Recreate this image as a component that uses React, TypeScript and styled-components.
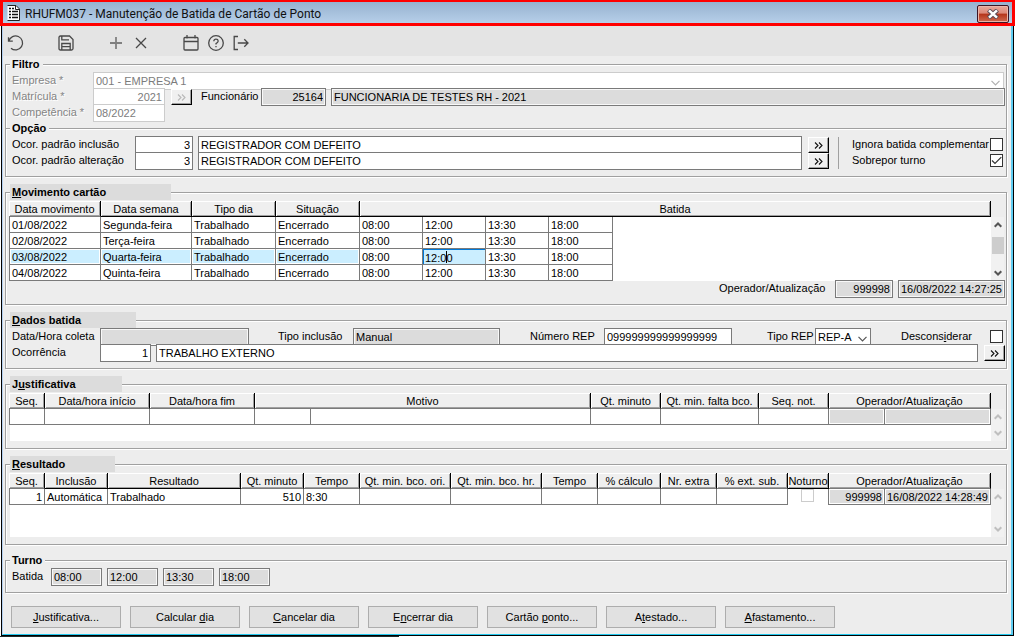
import React from 'react';
import styled, { createGlobalStyle, css } from 'styled-components';

const GlobalStyle = createGlobalStyle`
  * { box-sizing: border-box; }
  body {
    margin: 0;
    background: #fff;
    color: #000;
    font: 11px/16px "Liberation Sans", Arial, sans-serif;
  }
  button, input, select { font: inherit; color: inherit; border-radius: 0; }
`;

const LINE = '#7a7a7a';
const FACE = '#ededed';
const READONLY = '#dcdcdc';
const ACTIVE = '#cbeeff';

/* ---------- window ---------- */

const TitleBar = styled.header`
  display: flex;
  align-items: center;
  height: 26px;
  padding: 0 3px 0 4px;
  border: 3px solid #f00;
  border-top-width: 2px;
  background: linear-gradient(#97b2cf, #b6cfe9);
`;

const Title = styled.h1`
  flex: 1;
  margin: 0 0 0 5px;
  padding-top: 2px;
  font: 12px/20px Roboto, "Open Sans", sans-serif;
  color: #111;
  white-space: nowrap;
`;

const CloseButton = styled.button`
  display: flex;
  align-items: center;
  justify-content: center;
  align-self: flex-end;
  width: 32px;
  height: 18px;
  padding: 0;
  border: 1px solid #3d1525;
  border-radius: 2px;
  background: linear-gradient(#e9a79b 0, #dc8878 45%, #b5341a 50%, #cf6a50 100%);
  box-shadow: inset 0 0 0 1px #eab5a8;
`;

const Frame = styled.div`
  margin: 0 1px;
  border: 1px solid #000;
  border-top: 0;
`;

const Content = styled.main`
  padding-bottom: 6px;
  border: solid;
  border-width: 0 2px 1px 1px;
  border-color: #5fcdf2 #5fcdf2 #22c8ee #b4d0f0;
  background: ${FACE};
`;

const Shadow = styled.div`
  width: 399px;
  height: 1px;
  background: #1c2a2a;
`;

const Toolbar = styled.nav`
  display: flex;
  align-items: center;
  height: 30px;
  padding: 4px 0 0;
  background: #e4e4e4;
`;

const ToolButton = styled.button<{ $gap?: boolean; $soft?: boolean }>`
  display: flex;
  align-items: center;
  justify-content: center;
  width: 25px;
  height: 24px;
  margin-left: ${(p) => (p.$gap ? 25 : 0)}px;
  padding: 0;
  border: 0;
  background: none;
  color: ${(p) => (p.$soft ? '#808080' : '#484848')};
`;

const Form = styled.form`
  padding: 0 4px 0 2px;
`;

/* ---------- groups ---------- */

const Group = styled.fieldset<{ $joined?: boolean }>`
  min-width: 0;
  margin: ${(p) => (p.$joined ? -9 : 7)}px 0 0;
  padding: 0 1px 8px 3px;
  border: 1px solid #a0a0a0;
  box-shadow: 1px 1px 0 #fff, inset 1px 1px 0 #fff;

  &:first-of-type { margin-top: 0; }
`;

const Legend = styled.legend<{ $band?: number }>`
  width: ${(p) => (p.$band ? `${p.$band}px` : 'auto')};
  height: 16px;
  margin-left: 1px;
  padding: 0 3px 0 2px;
  background: ${(p) => (p.$band ? READONLY : FACE)};
  font-weight: bold;
`;

const Row = styled.div<{ $end?: boolean }>`
  display: flex;
  justify-content: ${(p) => (p.$end ? 'flex-end' : 'flex-start')};
  height: 16px;
`;

const Label = styled.label<{ $w?: number; $off?: boolean; $ml?: number }>`
  flex: none;
  width: ${(p) => (p.$w ? `${p.$w}px` : 'auto')};
  margin-left: ${(p) => p.$ml ?? 3}px;
  white-space: nowrap;
  ${(p) => p.$off && css`
    color: #848484;
    text-shadow: 1px 1px 0 #fff;
  `}
`;

const fieldBox = css`
  height: 18px;
  padding: 0 2px;
  border: 1px solid ${LINE};
  background: #fff;
  outline: 0;
`;

const Field = styled.input<{ $w?: number; $ml?: number; $right?: boolean; $off?: boolean }>`
  ${fieldBox}
  flex: ${(p) => (p.$w ? 'none' : '1')};
  min-width: 0;
  width: ${(p) => (p.$w ? `${p.$w}px` : 'auto')};
  margin-left: ${(p) => p.$ml ?? 0}px;
  text-align: ${(p) => (p.$right ? 'right' : 'left')};
  ${(p) => p.readOnly && css`
    background: ${READONLY};
    box-shadow: inset 0 0 0 1px #f8f8f8;
  `}
  ${(p) => p.$off && css`
    border-color: #ccc;
    color: #7c7c7c;
  `}
`;

const SelectBox = styled.span<{ $w?: number; $mr?: number; $off?: boolean }>`
  display: grid;
  flex: ${(p) => (p.$w ? 'none' : '1')};
  width: ${(p) => (p.$w ? `${p.$w}px` : 'auto')};
  height: 18px;
  margin-right: ${(p) => p.$mr ?? 0}px;
  color: ${(p) => (p.$off ? '#b0b0b0' : '#555')};

  select, svg { grid-area: 1 / 1; }

  select {
    ${fieldBox}
    appearance: none;
    width: 100%;
    border-color: ${(p) => (p.$off ? '#ccc' : LINE)};
    color: ${(p) => (p.$off ? '#7c7c7c' : '#000')};
    opacity: 1;
  }

  svg {
    justify-self: end;
    margin: 8px 4px 0 0;
    pointer-events: none;
  }
`;

const LookupButton = styled.button`
  display: flex;
  align-items: center;
  justify-content: center;
  flex: none;
  width: 21px;
  height: 16px;
  margin: 1px 0 0 6px;
  padding: 0;
  border: 1px solid;
  border-color: #fff #000 #000 #fff;
  background: #f0f0f0;
  box-shadow: inset -1px -1px 0 #a0a0a0;
  color: #111;

  &:disabled { color: #b8b8b8; }
`;

const Check = styled.span`
  position: relative;
  flex: none;
  width: 13px;
  height: 13px;
  margin: 2px 2px 0 auto;

  input {
    display: block;
    appearance: none;
    width: 13px;
    height: 13px;
    margin: 0;
    border: 1px solid #333;
    background: #fff;
  }
  input:disabled { border-color: #ccc; }
  svg { position: absolute; left: 0; top: 0; display: none; pointer-events: none; }
  input:checked + svg { display: block; }
`;

const OptionColumns = styled.div`
  display: flex;
  height: 32px;
`;

const OptionMain = styled.div`
  flex: 1;
  min-width: 0;
`;

const Separator = styled.div`
  width: 1px;
  margin: 1px 0 -1px 9px;
  background: #a0a0a0;
`;

const OptionSide = styled.div`
  width: 166px;
`;

/* ---------- grids ---------- */

const GridArea = styled.div<{ $h: number }>`
  display: flex;
  min-height: ${(p) => p.$h}px;
  margin: 0 1px -1px 0;
  border: solid transparent;
  border-width: 1px 0 0 1px;
  background: #fff;
  background-clip: padding-box;
`;

const GridMain = styled.div`
  flex: 1;
  min-width: 0;
  margin-left: -1px;
`;

const Grid = styled.table`
  width: 100%;
  table-layout: fixed;
  border-collapse: separate;
  border-spacing: 0;
`;

const HeadCell = styled.th<{ $dark?: boolean }>`
  height: 16px;
  padding: 2px 0 0;
  border: solid;
  border-width: 0 1px 1px 0;
  border-color: #000;
  border-bottom-color: ${(p) => (p.$dark ? '#000' : LINE)};
  background: #efefef;
  box-shadow: inset 1px 1px 0 #fff, inset -1px -1px 0 #a0a0a0;
  font-weight: normal;
  line-height: 13px;
  white-space: nowrap;
  overflow: hidden;
`;

const Cell = styled.td<{ $active?: boolean; $read?: boolean; $right?: boolean; $bare?: boolean }>`
  height: 16px;
  padding: 2px 2px 0;
  border: solid ${LINE};
  border-width: ${(p) => (p.$bare ? '0' : '0 1px 1px 0')};
  background: ${(p) => (p.$active ? ACTIVE : p.$read ? READONLY : '#fff')};
  box-shadow: ${(p) => (p.$active || p.$read ? 'inset 0 0 0 1px #fff' : 'none')};
  line-height: 13px;
  text-align: ${(p) => (p.$right ? 'right' : 'left')};
  white-space: nowrap;

  &:first-child { border-left-width: 1px; }
`;

const FocusCell = styled(Cell)`
  position: relative;
  padding: 0;
  box-shadow: inset 1px 1px 0 #0078d7;

  input {
    display: block;
    width: 100%;
    height: 15px;
    padding: 2px 2px 0;
    border: 0;
    background: none;
    outline: 0;
  }
`;

const Caret = styled.i`
  position: absolute;
  left: 23px;
  top: 2px;
  width: 1px;
  height: 12px;
  background: #000;
`;

const CheckCell = styled(Cell)`
  border-width: 0 1px 0 0;
  padding: 0 0 0 13px;
  vertical-align: top;

  span { display: block; height: 13px; margin: 0; }
`;

const Scroll = styled.div<{ $off?: boolean }>`
  display: flex;
  flex-direction: column;
  align-items: center;
  flex: none;
  width: 13px;
  padding-top: 16px;
  background: linear-gradient(${FACE} 16px, #f1f1f1 16px);
  color: ${(p) => (p.$off ? '#bfbfbf' : '#555')};

  button {
    display: flex;
    align-items: center;
    justify-content: center;
    width: 12px;
    height: 16px;
    padding: 0;
    border: 0;
    background: none;
    color: inherit;
  }
  button:last-child { margin-top: auto; }
`;

const Thumb = styled.div`
  width: 12px;
  height: 17px;
  margin-top: 4px;
  background: #cdcdcd;
`;

/* ---------- footer ---------- */

const Actions = styled.div`
  display: flex;
  gap: 9px;
  margin: 13px 0 0 6px;
`;

const ActionButton = styled.button`
  width: 110px;
  height: 22px;
  padding: 0;
  border: 1px solid #adadad;
  background: #e1e1e1;
`;

/* ---------- drawings ---------- */

const Glyph = ({ children }: { children: React.ReactNode }) => (
  <svg width="18" height="18" viewBox="0 0 18 18" fill="none" stroke="currentColor" strokeWidth="1.3">
    {children}
  </svg>
);

const Chevron = () => (
  <svg width="9" height="6" viewBox="0 0 9 6" fill="none" stroke="currentColor" strokeWidth="1.2">
    <path d="M.5 .8 4.5 4.8 8.5 .8" />
  </svg>
);

const Arrow = ({ up }: { up?: boolean }) => (
  <svg width="8" height="6" viewBox="0 0 8 6" fill="none" stroke="currentColor" strokeWidth="2">
    <path d={up ? 'M.7 4.8 4 1.5 7.3 4.8' : 'M.7 1.2 4 4.5 7.3 1.2'} />
  </svg>
);

const Tick = () => (
  <svg width="13" height="13" viewBox="0 0 13 13" fill="none" stroke="#333" strokeWidth="1.2">
    <path d="M2 6.5 5 9.5 11.3 3.2" />
  </svg>
);

const Lookup = ({ label, disabled }: { label: string; disabled?: boolean }) => (
  <LookupButton type="button" aria-label={label} disabled={disabled}>
    <svg width="9" height="7" viewBox="0 0 9 7" fill="none" stroke="currentColor" strokeWidth="1.1">
      <path d="M1 .5 4 3.5 1 6.5M5 .5 8 3.5 5 6.5" />
    </svg>
  </LookupButton>
);

const DocumentIcon = () => (
  <svg width="13" height="16" viewBox="0 0 13 16">
    <path d="M.5 .5H9L12.5 4V15.5H.5Z" fill="#fff" />
    <path d="M.5 .5H9L12.5 4V15.5H.5" fill="none" stroke="#222" />
    <path d="M8.5 .5V4.5H12.5" fill="none" stroke="#222" />
    <path d="M2 3.5H4M2 6.5H4M2 9.5H4M2 12.5H4M5 3.5H7M5 6.5H11M5 9.5H11M5 12.5H11" stroke="#111" strokeWidth="1.4" />
  </svg>
);

/* ---------- grid parts ---------- */

type Head = { text: React.ReactNode; span?: number; dark?: boolean };

const GridTable = ({ widths, heads, label, children }: {
  widths: (number | null)[];
  heads: Head[];
  label: string;
  children: React.ReactNode;
}) => (
  <GridMain>
    <Grid aria-label={label}>
      <colgroup>
        {widths.map((w, i) => <col key={i} width={w ?? undefined} />)}
      </colgroup>
      <thead>
        <tr>
          {heads.map((h, i) => <HeadCell key={i} scope="col" colSpan={h.span} $dark={h.dark}>{h.text}</HeadCell>)}
        </tr>
      </thead>
      <tbody>{children}</tbody>
    </Grid>
  </GridMain>
);

const ScrollBar = ({ thumb }: { thumb?: boolean }) => (
  <Scroll $off={!thumb}>
    <button type="button" aria-label="Rolar para cima"><Arrow up /></button>
    {thumb && <Thumb />}
    <button type="button" aria-label="Rolar para baixo"><Arrow /></button>
  </Scroll>
);

const days = [
  { date: '01/08/2022', week: 'Segunda-feira' },
  { date: '02/08/2022', week: 'Terça-feira' },
  { date: '03/08/2022', week: 'Quarta-feira', active: true },
  { date: '04/08/2022', week: 'Quinta-feira' },
];

const shift = ['08:00', '12:00', '13:30', '18:00'];

export default function App() {
  return (
    <>
      <GlobalStyle />
      <TitleBar>
        <DocumentIcon />
        <Title>RHUFM037 - Manutenção de Batida de Cartão de Ponto</Title>
        <CloseButton aria-label="Fechar">
          <svg width="12" height="10" viewBox="0 0 12 10" fill="none">
            <path d="M1.5 1 10.5 9M10.5 1 1.5 9" stroke="#5a4a55" strokeWidth="4.4" />
            <path d="M2 1.4 10 8.6M10 1.4 2 8.6" stroke="#fff" strokeWidth="2.6" />
          </svg>
        </CloseButton>
      </TitleBar>
      <Frame>
        <Content>
          <Toolbar>
            <ToolButton aria-label="Desfazer">
              <Glyph><path d="M1.5 3.2V7.2H5.8M1.8 7A7 7 0 1 1 4 14.2" /></Glyph>
            </ToolButton>
            <ToolButton $gap aria-label="Salvar">
              <Glyph>
                <path d="M3.5 2H12.5L16 5.5V14.5Q16 16 14.5 16H3.5Q2 16 2 14.5V3.5Q2 2 3.5 2Z" />
                <path d="M4.8 2V5.8H12M4.8 16V9.5H13.2V16M5 12.7H13" />
              </Glyph>
            </ToolButton>
            <ToolButton $gap $soft aria-label="Incluir">
              <Glyph><path d="M9 3V15M3 9H15" strokeWidth="1.8" /></Glyph>
            </ToolButton>
            <ToolButton aria-label="Excluir">
              <Glyph><path d="M4 4 14 14M14 4 4 14" /></Glyph>
            </ToolButton>
            <ToolButton $gap aria-label="Calendário">
              <Glyph><path d="M3 3.5H15Q16 3.5 16 4.5V15Q16 16 15 16H3Q2 16 2 15V4.5Q2 3.5 3 3.5ZM2 7.5H16M5 1V4.5M13 1V4.5" /></Glyph>
            </ToolButton>
            <ToolButton aria-label="Ajuda">
              <Glyph>
                <circle cx="9" cy="9" r="7.3" />
                <path d="M6.8 7.2Q7 5.2 9 5.2T11.2 7Q11.2 8.2 9 9.6V10.4M9 12V13.2" />
              </Glyph>
            </ToolButton>
            <ToolButton aria-label="Sair">
              <Glyph><path d="M6 2.5H2.2V15.5H6M5.8 9H16M12.3 5.3 16 9 12.3 12.7" /></Glyph>
            </ToolButton>
          </Toolbar>

          <Form onSubmit={(e) => e.preventDefault()}>
            <Group>
              <Legend>Filtro</Legend>
              <Row>
                <Label htmlFor="empresa" $w={81} $off>Empresa *</Label>
                <SelectBox $off $mr={1}>
                  <select id="empresa" disabled><option>001 - EMPRESA 1</option></select>
                  <Chevron />
                </SelectBox>
              </Row>
              <Row>
                <Label htmlFor="matricula" $w={81} $off>Matrícula *</Label>
                <Field id="matricula" $w={72} $right $off defaultValue="2021" />
                <Lookup label="Pesquisar matrícula" disabled />
                <Label htmlFor="funcionario" $ml={9} $w={60}>Funcionário</Label>
                <Field id="funcionario" $w={65} $right readOnly value="25164" />
                <Field aria-label="Nome do funcionário" $ml={5} readOnly value="FUNCIONARIA DE TESTES RH - 2021" />
              </Row>
              <Row>
                <Label htmlFor="competencia" $w={81} $off>Competência *</Label>
                <Field id="competencia" $w={72} $off defaultValue="08/2022" />
              </Row>
            </Group>

            <Group $joined>
              <Legend>Opção</Legend>
              <OptionColumns>
                <OptionMain>
                  <Row>
                    <Label htmlFor="inclusao" $w={123}>Ocor. padrão inclusão</Label>
                    <Field id="inclusao" $w={58} $right defaultValue="3" />
                    <Field aria-label="Descrição da inclusão" $ml={5} defaultValue="REGISTRADOR COM DEFEITO" />
                    <Lookup label="Pesquisar inclusão" />
                  </Row>
                  <Row>
                    <Label htmlFor="alteracao" $w={123}>Ocor. padrão alteração</Label>
                    <Field id="alteracao" $w={58} $right defaultValue="3" />
                    <Field aria-label="Descrição da alteração" $ml={5} defaultValue="REGISTRADOR COM DEFEITO" />
                    <Lookup label="Pesquisar alteração" />
                  </Row>
                </OptionMain>
                <Separator />
                <OptionSide>
                  <Row>
                    <Label htmlFor="ignora" $ml={13}>Ignora batida complementar</Label>
                    <Check><input type="checkbox" id="ignora" /><Tick /></Check>
                  </Row>
                  <Row>
                    <Label htmlFor="sobrepor" $ml={13}>Sobrepor turno</Label>
                    <Check><input type="checkbox" id="sobrepor" defaultChecked /><Tick /></Check>
                  </Row>
                </OptionSide>
              </OptionColumns>
            </Group>

            <Group>
              <Legend $band={161}><u>M</u>ovimento cartão</Legend>
              <GridArea $h={81}>
                <GridTable
                  label="Movimento cartão"
                  widths={[92, 91, 84, 84, 63, 63, 63, 64, null]}
                  heads={[
                    { text: 'Data movimento' },
                    { text: 'Data semana', dark: true },
                    { text: 'Tipo dia', dark: true },
                    { text: 'Situação', dark: true },
                    { text: 'Batida', span: 5, dark: true },
                  ]}
                >
                  {days.map((d) => (
                    <tr key={d.date}>
                      <Cell $active={d.active}>{d.date}</Cell>
                      <Cell $active={d.active}>{d.week}</Cell>
                      <Cell $active={d.active}>Trabalhado</Cell>
                      <Cell $active={d.active}>Encerrado</Cell>
                      {shift.map((t, i) => (d.active && i === 1 ? (
                        <FocusCell key={t} $active>
                          <input aria-label="Batida" defaultValue={t} />
                          <Caret />
                        </FocusCell>
                      ) : <Cell key={t}>{t}</Cell>))}
                      <Cell $bare />
                    </tr>
                  ))}
                </GridTable>
                <ScrollBar thumb />
              </GridArea>
              <Row $end>
                <Label htmlFor="operador" $w={116}>Operador/Atualização</Label>
                <Field id="operador" $w={58} $right readOnly value="999998" />
                <Field aria-label="Data da atualização" $w={107} $ml={5} readOnly value="16/08/2022 14:27:25" />
              </Row>
            </Group>

            <Group>
              <Legend $band={126}><u>D</u>ados batida</Legend>
              <Row>
                <Label htmlFor="coleta" $w={88}>Data/Hora coleta</Label>
                <Field id="coleta" $w={149} readOnly value="" />
                <Label htmlFor="tipo-inclusao" $ml={29} $w={75}>Tipo inclusão</Label>
                <Field id="tipo-inclusao" $w={147} readOnly value="Manual" />
                <Label htmlFor="numero-rep" $ml={30} $w={74}>Número REP</Label>
                <Field id="numero-rep" $w={128} defaultValue="099999999999999999" />
                <Label htmlFor="tipo-rep" $ml={35} $w={48}>Tipo REP</Label>
                <SelectBox $w={56}>
                  <select id="tipo-rep"><option>REP-A</option></select>
                  <Chevron />
                </SelectBox>
                <Label htmlFor="desconsiderar" $ml={30}>Descons<u>i</u>derar</Label>
                <Check><input type="checkbox" id="desconsiderar" /><Tick /></Check>
              </Row>
              <Row>
                <Label htmlFor="ocorrencia" $w={88}>Ocorrência</Label>
                <Field id="ocorrencia" $w={51} $right defaultValue="1" />
                <Field aria-label="Descrição da ocorrência" $ml={5} defaultValue="TRABALHO EXTERNO" />
                <Lookup label="Pesquisar ocorrência" />
              </Row>
            </Group>

            <Group>
              <Legend $band={112}>J<u>u</u>stificativa</Legend>
              <GridArea $h={49}>
                <GridTable
                  label="Justificativa"
                  widths={[36, 105, 105, 56, null, 70, 98, 70, 56, 106]}
                  heads={[
                    { text: 'Seq.' },
                    { text: 'Data/hora início' },
                    { text: 'Data/hora fim' },
                    { text: 'Motivo', span: 2 },
                    { text: 'Qt. minuto' },
                    { text: 'Qt. min. falta bco.' },
                    { text: 'Seq. not.' },
                    { text: 'Operador/Atualização', span: 2 },
                  ]}
                >
                  <tr>
                    <Cell /><Cell /><Cell /><Cell /><Cell /><Cell /><Cell /><Cell />
                    <Cell $read /><Cell $read />
                  </tr>
                </GridTable>
                <ScrollBar />
              </GridArea>
            </Group>

            <Group>
              <Legend $band={105}><u>R</u>esultado</Legend>
              <GridArea $h={65}>
                <GridTable
                  label="Resultado"
                  widths={[36, 63, null, 63, 56, 91, 91, 56, 63, 56, 71, 41, 56, 106]}
                  heads={[
                    { text: 'Seq.' },
                    { text: 'Inclusão', dark: true },
                    { text: 'Resultado', dark: true },
                    { text: 'Qt. minuto' },
                    { text: 'Tempo' },
                    { text: 'Qt. min. bco. ori.' },
                    { text: 'Qt. min. bco. hr.' },
                    { text: 'Tempo' },
                    { text: '% cálculo' },
                    { text: 'Nr. extra' },
                    { text: '% ext. sub.' },
                    { text: 'Noturno', dark: true },
                    { text: 'Operador/Atualização', span: 2 },
                  ]}
                >
                  <tr>
                    <Cell $right>1</Cell>
                    <Cell>Automática</Cell>
                    <Cell>Trabalhado</Cell>
                    <Cell $right>510</Cell>
                    <Cell>8:30</Cell>
                    <Cell /><Cell /><Cell /><Cell /><Cell /><Cell />
                    <CheckCell>
                      <Check><input type="checkbox" aria-label="Noturno" disabled /><Tick /></Check>
                    </CheckCell>
                    <Cell $read $right>999998</Cell>
                    <Cell $read>16/08/2022 14:28:49</Cell>
                  </tr>
                </GridTable>
                <ScrollBar />
              </GridArea>
            </Group>

            <Group>
              <Legend>Turno</Legend>
              <Row>
                <Label htmlFor="turno-0" $w={34}>Batida</Label>
                {shift.map((t, i) => (
                  <Field key={t} id={`turno-${i}`} aria-label={i ? `Batida ${i + 1}` : undefined} $w={51} $ml={5} readOnly value={t} />
                ))}
              </Row>
            </Group>

            <Actions>
              <ActionButton type="button"><u>J</u>ustificativa...</ActionButton>
              <ActionButton type="button">Calcular <u>d</u>ia</ActionButton>
              <ActionButton type="button"><u>C</u>ancelar dia</ActionButton>
              <ActionButton type="button">E<u>n</u>cerrar dia</ActionButton>
              <ActionButton type="button">Cartão <u>p</u>onto...</ActionButton>
              <ActionButton type="button">A<u>t</u>estado...</ActionButton>
              <ActionButton type="button"><u>A</u>fastamento...</ActionButton>
            </Actions>
          </Form>
        </Content>
      </Frame>
      <Shadow />
    </>
  );
}
